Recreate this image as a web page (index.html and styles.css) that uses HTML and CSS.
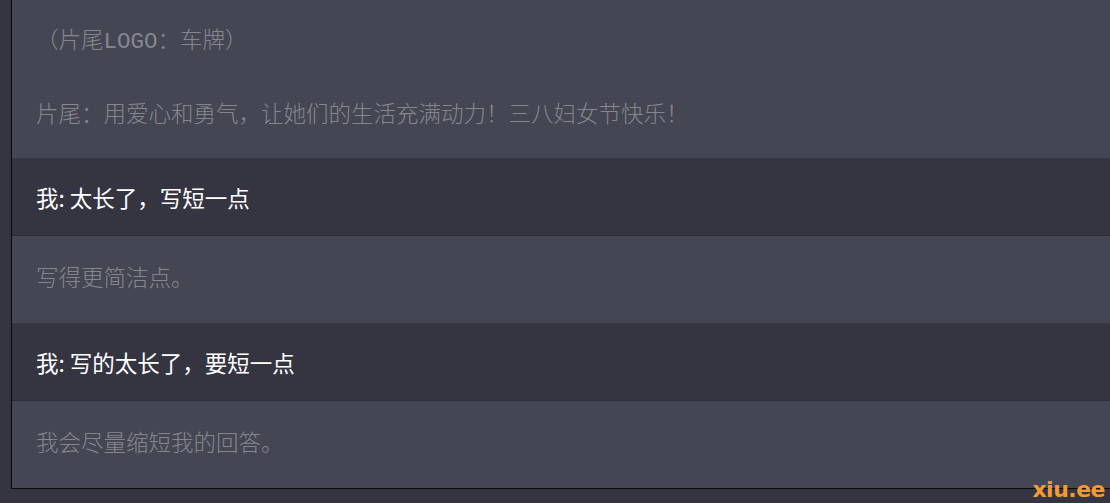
FILE: index.html
```html
<!DOCTYPE html>
<html lang="zh-CN">
<head>
  <meta charset="UTF-8">
  <title>对话</title>
  <link rel="stylesheet" href="styles.css">
</head>
<body>
  <div class="page">
    <div class="side-strip"></div>

    <div class="chat">
      <div class="msg bot first">
        <p>（片尾LOGO：车牌）</p>
        <p>片尾：用爱心和勇气，让她们的生活充满动力！三八妇女节快乐！</p>
      </div>

      <div class="msg user">
        <p>我: 太长了，写短一点</p>
      </div>

      <div class="msg bot">
        <p>写得更简洁点。</p>
      </div>

      <div class="msg user">
        <p>我: 写的太长了，要短一点</p>
      </div>

      <div class="msg bot last">
        <p>我会尽量缩短我的回答。</p>
      </div>
    </div>
  </div>

  <div class="watermark">xiu.ee</div>
</body>
</html>
```

FILE: styles.css
```css
body {
  margin: 0;
  padding: 0;
  background: #343541;
  font-family: "Noto Sans CJK SC", "Noto Sans", sans-serif;
  height: 503px;
  overflow: hidden;
  position: relative;
}

.page {
  display: flex;
  height: 489px;
}

.side-strip {
  width: 11px;
  flex-shrink: 0;
  background: #343541;
}

.chat {
  flex: 1;
  border-left: 1px solid #0a0a0d;
  border-bottom: 1px solid #0a0a0d;
  background: #444654;
  display: flex;
  flex-direction: column;
}

.msg {
  flex-shrink: 0;
  padding: 0 24px;
  border-bottom: 1px solid rgba(20, 20, 30, 0.25);
}

.msg p {
  margin: 0;
}

.bot {
  background: #444654;
  padding-top: 28px;
  padding-bottom: 27px;
  color: #858690;
  font-family: "Liberation Mono", "Noto Sans CJK SC", monospace;
  font-size: 22.5px;
  font-weight: 300;
  line-height: 32px;
}

.bot p + p {
  margin-top: 42px;
}

.bot.first {
  padding-top: 26px;
  padding-bottom: 26px;
}

.bot.last {
  border-bottom: none;
}

.user {
  background: #343541;
  padding-top: 23px;
  padding-bottom: 23px;
  color: #ffffff;
  font-size: 22.5px;
  line-height: 30px;
}

.watermark {
  position: absolute;
  right: 5px;
  bottom: 1px;
  font-family: "DejaVu Sans", sans-serif;
  font-weight: 900;
  font-size: 22px;
  line-height: 24px;
  color: #f39a33;
  letter-spacing: -0.5px;
}
```
